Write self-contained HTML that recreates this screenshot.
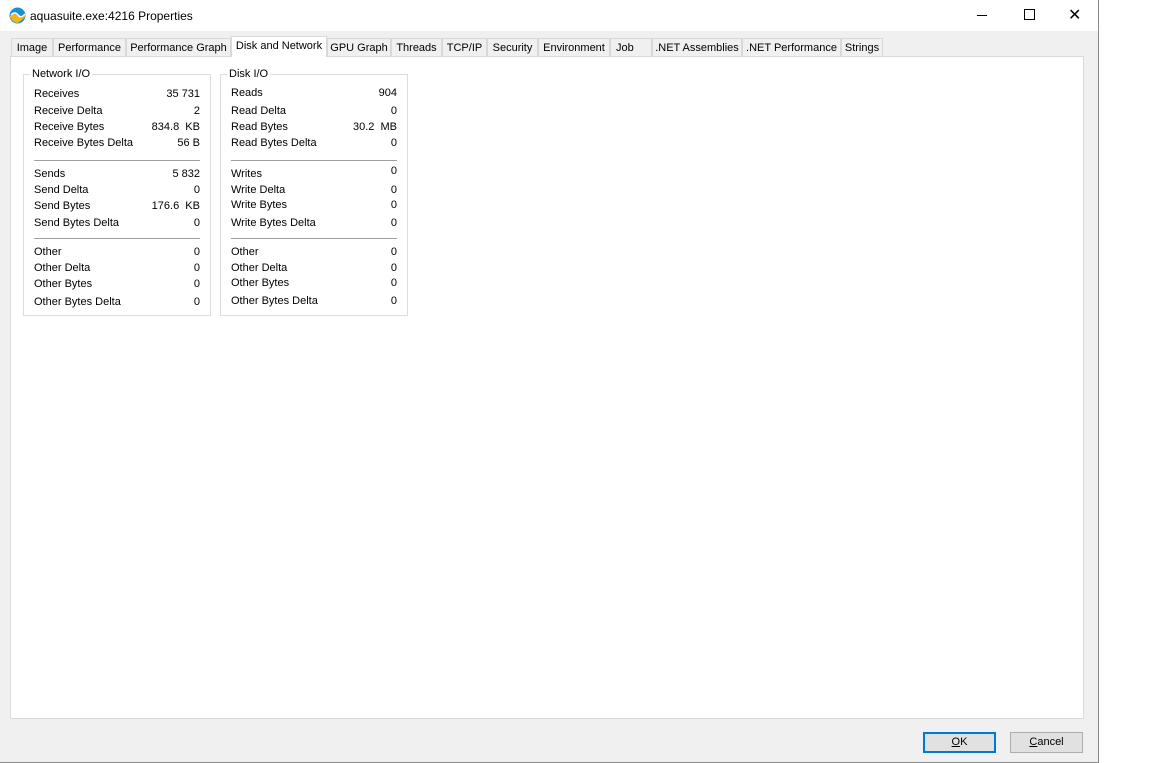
<!DOCTYPE html><html><head><style>
body{margin:0;width:1152px;height:763px;background:#fff;font-family:"Liberation Sans",sans-serif;font-size:11px;color:#000;position:relative;overflow:hidden}
.win{position:absolute;left:0;top:0;width:1098px;height:762px;background:#f0f0f0;border-right:1px solid #888;border-bottom:1px solid #888}
.title{position:absolute;left:0;top:0;width:1098px;height:31px;background:#fff}
.tab{position:absolute;top:38px;height:18px;border:1px solid #d9d9d9;border-bottom:none;background:#f0f0f0;box-sizing:border-box;text-align:center;line-height:18px;font-size:11px}
.page{position:absolute;left:10px;top:56px;width:1074px;height:663px;background:#fff;border:1px solid #d9d9d9;box-sizing:border-box}
.gb{position:absolute;border:1px solid #dcdcdc;box-sizing:border-box}
.gt{position:absolute;top:-7px;left:6px;background:#fff;padding:0 2px}
.r{position:absolute;left:10px;right:10px}
.r span{position:absolute;right:0}
.sep{position:absolute;left:10px;right:10px;height:1px;background:#a0a0a0}
.btn{position:absolute;top:732px;height:21px;box-sizing:border-box;background:#e1e1e1;border:1px solid #adadad;text-align:center;line-height:19px}
</style></head><body>
<div class="win">
<div class="title">
<svg style="position:absolute;left:9px;top:7px" width="17" height="17" viewBox="0 0 17 17"><circle cx="8.5" cy="8.5" r="8" fill="#1a8fd6"/><path d="M1 9 Q5 5 9 9 T16 8 L16 10 Q12 14 8.5 16 Q3 15 1 10Z" fill="#f3b51b"/><path d="M2 8 Q6 4 9 8 T16 7" stroke="#fff" stroke-width="1.5" fill="none"/></svg>
<div style="position:absolute;left:30px;top:9px;font-size:12px">aquasuite.exe:4216 Properties</div>
<div style="position:absolute;left:977px;top:15px;width:10px;height:1px;background:#000"></div>
<div style="position:absolute;left:1024px;top:9px;width:9px;height:9px;border:1px solid #000"></div>
<div style="position:absolute;left:1068px;top:5px;font-size:16px">✕</div>
</div>
<div class="tab" style="left:11px;width:42px">Image</div>
<div class="tab" style="left:53px;width:73px">Performance</div>
<div class="tab" style="left:126px;width:105px">Performance Graph</div>
<div class="tab" style="left:327px;width:64px">GPU Graph</div>
<div class="tab" style="left:391px;width:51px">Threads</div>
<div class="tab" style="left:442px;width:45px">TCP/IP</div>
<div class="tab" style="left:487px;width:51px">Security</div>
<div class="tab" style="left:538px;width:72px">Environment</div>
<div class="tab" style="left:610px;width:42px;text-align:left;padding-left:5px">Job</div>
<div class="tab" style="left:652px;width:90px">.NET Assemblies</div>
<div class="tab" style="left:742px;width:99px">.NET Performance</div>
<div class="tab" style="left:841px;width:42px">Strings</div>
<div class="page">
<div class="gb" style="left:12px;top:17px;width:188px;height:242px"><div class="gt">Network I/O</div>
<div class="r" style="top:13px">Receives<span>35 731</span></div>
<div class="r" style="top:30px">Receive Delta<span>2</span></div>
<div class="r" style="top:46px">Receive Bytes<span>834.8 &nbsp;KB</span></div>
<div class="r" style="top:62px">Receive Bytes Delta<span>56 B</span></div>
<div class="sep" style="top:85px"></div>
<div class="r" style="top:93px">Sends<span>5 832</span></div>
<div class="r" style="top:109px">Send Delta<span>0</span></div>
<div class="r" style="top:125px">Send Bytes<span>176.6 &nbsp;KB</span></div>
<div class="r" style="top:142px">Send Bytes Delta<span>0</span></div>
<div class="sep" style="top:163px"></div>
<div class="r" style="top:171px">Other<span>0</span></div>
<div class="r" style="top:187px">Other Delta<span>0</span></div>
<div class="r" style="top:203px">Other Bytes<span>0</span></div>
<div class="r" style="top:221px">Other Bytes Delta<span>0</span></div>
</div>
<div class="gb" style="left:209px;top:17px;width:188px;height:242px"><div class="gt">Disk I/O</div>
<div class="r" style="top:12px">Reads<span>904</span></div>
<div class="r" style="top:30px">Read Delta<span>0</span></div>
<div class="r" style="top:46px">Read Bytes<span>30.2 &nbsp;MB</span></div>
<div class="r" style="top:62px">Read Bytes Delta<span>0</span></div>
<div class="sep" style="top:85px"></div>
<div class="r" style="top:93px">Writes<span style="top:-3px">0</span></div>
<div class="r" style="top:109px">Write Delta<span>0</span></div>
<div class="r" style="top:124px">Write Bytes<span>0</span></div>
<div class="r" style="top:142px">Write Bytes Delta<span>0</span></div>
<div class="sep" style="top:163px"></div>
<div class="r" style="top:171px">Other<span>0</span></div>
<div class="r" style="top:187px">Other Delta<span>0</span></div>
<div class="r" style="top:202px">Other Bytes<span>0</span></div>
<div class="r" style="top:220px">Other Bytes Delta<span>0</span></div>
</div>
</div>
<div class="tab" style="left:231px;top:36px;width:96px;height:21px;background:#fff;line-height:19px;z-index:2">Disk and Network</div>
<div class="btn" style="left:923px;width:73px;border:2px solid #0078d7;line-height:17px"><u>O</u>K</div>
<div class="btn" style="left:1010px;width:73px"><u>C</u>ancel</div>
</div>
</body></html>
